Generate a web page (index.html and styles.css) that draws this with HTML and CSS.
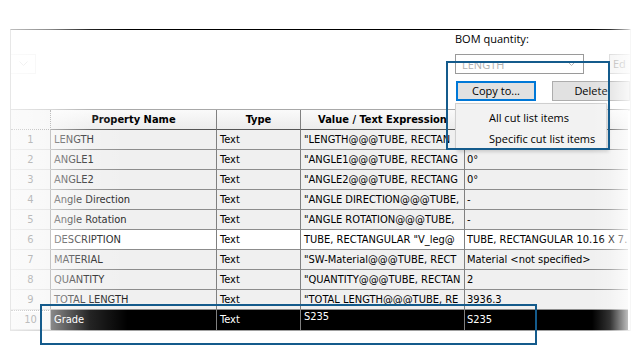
FILE: index.html
```html
<!DOCTYPE html>
<html lang="en">
<head>
    <meta charset="UTF-8">
    <title>Cut List Properties</title>
    <link rel="stylesheet" href="styles.css">
</head>
<body>
    <div class="stage">
        <div class="panel">
            <div class="toolbar">
                <div class="ghost-select">
                    <svg width="9" height="6" viewBox="0 0 9 6"><path d="M0.5 0.5 L4.5 4.5 L8.5 0.5" fill="none" stroke="#d6d6d6" stroke-width="1"/></svg>
                </div>
                <div class="bom">
                    <div class="bom-label">BOM quantity:</div>
                    <div class="bom-row">
                        <div class="select">
                            <span>LENGTH</span>
                            <svg width="9" height="6" viewBox="0 0 9 6"><path d="M0.5 0.5 L4.5 4.5 L8.5 0.5" fill="none" stroke="#b4b4b4" stroke-width="1"/></svg>
                        </div>
                        <div class="btn btn-disabled">Ed</div>
                    </div>
                    <div class="bom-row">
                        <div class="btn btn-focus">Copy to...</div>
                        <div class="btn btn-wide">Delete</div>
                    </div>
                </div>
            </div>

            <div class="grid">
                <div class="cell num head-num"></div>
                <div class="cell head">Property Name</div>
                <div class="cell head">Type</div>
                <div class="cell head">Value / Text Expression</div>
                <div class="cell head last"></div>

                <div class="cell num">1</div>
                <div class="cell name">LENGTH</div>
                <div class="cell">Text</div>
                <div class="cell">"LENGTH@@@TUBE, RECTAN</div>
                <div class="cell last"></div>

                <div class="cell num">2</div>
                <div class="cell name">ANGLE1</div>
                <div class="cell">Text</div>
                <div class="cell">"ANGLE1@@@TUBE, RECTANG</div>
                <div class="cell last">0°</div>

                <div class="cell num">3</div>
                <div class="cell name">ANGLE2</div>
                <div class="cell">Text</div>
                <div class="cell">"ANGLE2@@@TUBE, RECTANG</div>
                <div class="cell last">0°</div>

                <div class="cell num">4</div>
                <div class="cell name">Angle Direction</div>
                <div class="cell">Text</div>
                <div class="cell">"ANGLE DIRECTION@@@TUBE,</div>
                <div class="cell last">-</div>

                <div class="cell num">5</div>
                <div class="cell name">Angle Rotation</div>
                <div class="cell">Text</div>
                <div class="cell">"ANGLE ROTATION@@@TUBE,</div>
                <div class="cell last">-</div>

                <div class="cell num">6</div>
                <div class="cell name white">DESCRIPTION</div>
                <div class="cell white">Text</div>
                <div class="cell white">TUBE, RECTANGULAR "V_leg@</div>
                <div class="cell last white">TUBE, RECTANGULAR 10.16 X 7.</div>

                <div class="cell num">7</div>
                <div class="cell name">MATERIAL</div>
                <div class="cell">Text</div>
                <div class="cell">"SW-Material@@@TUBE, RECT</div>
                <div class="cell last">Material &lt;not specified&gt;</div>

                <div class="cell num">8</div>
                <div class="cell name">QUANTITY</div>
                <div class="cell">Text</div>
                <div class="cell">"QUANTITY@@@TUBE, RECTAN</div>
                <div class="cell last">2</div>

                <div class="cell num">9</div>
                <div class="cell name">TOTAL LENGTH</div>
                <div class="cell">Text</div>
                <div class="cell">"TOTAL LENGTH@@@TUBE, RE</div>
                <div class="cell last">3936.3</div>

                <div class="cell num num-focus">10</div>
                <div class="cell name sel">Grade</div>
                <div class="cell sel">Text</div>
                <div class="cell sel edit">S235</div>
                <div class="cell last sel">S235</div>
            </div>
        </div>

        <div class="menu">
            <div class="menu-item">All cut list items</div>
            <div class="menu-item">Specific cut list items</div>
        </div>

        <div class="fade fade-left"></div>
        <div class="fade fade-right"></div>

        <div class="callout callout-top"></div>
        <div class="callout callout-bottom"></div>
    </div>
</body>
</html>
```

FILE: styles.css
```css
body {
    margin: 0;
    background: #fff;
    font-family: "DejaVu Sans Condensed", "DejaVu Sans", sans-serif;
    font-stretch: condensed;
    font-size: 11px;
    color: #000;
}
.stage {
    position: relative;
    width: 640px;
    height: 360px;
    padding: 29px 0 0 10px;
    box-sizing: border-box;
    overflow: hidden;
}
.panel {
    width: 619px;
    border: 1px solid #a0a0a0;
    border-top-color: #000;
    overflow: hidden;
    background: #fff;
}
.toolbar {
    display: flex;
    height: 79px;
}
.ghost-select {
    flex: none;
    width: 23px;
    height: 18px;
    margin-top: 24px;
    border: 1px solid #ececec;
    border-left: none;
    display: flex;
    align-items: center;
    justify-content: center;
    padding-left: 1px;
}
.bom {
    margin-left: 419px;
    font-family: "Open Sans", sans-serif;
    font-stretch: normal;
    font-size: 11px;
    flex: none;
}
.bom-label {
    height: 16px;
    line-height: 16px;
    margin-top: 1px;
    color: #000;
}
.bom-row {
    display: flex;
    margin-top: 7px;
    height: 20px;
}
.select {
    height: 18px;
    border: 1px solid #9a9a9a;
    display: flex;
    align-items: center;
    justify-content: space-between;
    padding: 0 7px 0 6px;
    box-sizing: content-box;
    width: 114px;
    color: #b0b0b0;
}
.btn {
    height: 18px;
    line-height: 18px;
    border: 1px solid #adadad;
    background: #e1e1e1;
    text-align: center;
    flex: none;
}
.btn-disabled {
    width: 60px;
    margin-left: 25px;
    background: #f4f4f4;
    border-color: #d6d6d6;
    color: #a8a8a8;
    text-align: left;
    padding-left: 3px;
}
.btn-focus {
    width: 76px;
    height: 16px;
    line-height: 16px;
    border: 2px solid #0078d7;
    margin-left: 1px;
}
.btn-wide {
    width: 76px;
    margin-left: 16px;
}
.grid {
    display: grid;
    grid-template-columns: 40px 166px 84px 164px 163px;
    grid-auto-rows: 20px;
    border-top: 1px solid #a8a8a8;
    box-shadow: inset 0 1px 0 #d8d8d8;
}
.cell {
    background: #f0f0f0;
    border-right: 1px solid #808080;
    border-bottom: 1px solid #8c8c8c;
    line-height: 19px;
    padding-left: 3px;
    white-space: nowrap;
    overflow: hidden;
}
.cell.last {
    border-right: none;
    padding-left: 2px;
}
.cell.white {
    background: #fff;
}
.head {
    background: linear-gradient(#fafafa, #ececec);
    font-weight: bold;
    text-align: center;
    padding-left: 0;
    border-bottom-color: #555;
}
.num {
    padding: 0;
    text-align: center;
    color: #3c3c3c;
    border-bottom-color: #c8c8c8;
}
.head-num {
    border-right: 1px dotted #707070;
    border-bottom: 1px dotted #707070;
}
.num-focus {
    box-shadow: inset 0 1px 0 #fff;
    border-top: 1px dotted #707070;
    line-height: 18px;
}
.name {
    color: #222;
}
.sel {
    background: #000;
    color: #fff;
    border-bottom: none;
    border-right-color: #808080;
}
.sel.edit {
    line-height: 14px;
}
.menu {
    position: absolute;
    left: 455px;
    top: 103px;
    width: 152px;
    height: 47px;
    padding: 4px 0 0 33px;
    box-sizing: border-box;
    background: #f2f2f2;
    border: 1px solid #cfcfcf;
    font-family: "Open Sans", sans-serif;
    font-stretch: normal;
    font-size: 11px;
    box-shadow: 2px 2px 3px rgba(0,0,0,0.15);
}
.menu-item {
    height: 21px;
    line-height: 20px;
}
.fade {
    position: absolute;
    top: 0;
    height: 360px;
}
.fade-left {
    left: 0;
    width: 130px;
    background: linear-gradient(to right, rgba(255,255,255,0.8) 0, rgba(255,255,255,0.55) 50px, rgba(255,255,255,0.14) 90px, rgba(255,255,255,0) 128px);
}
.fade-right {
    left: 592px;
    width: 48px;
    background: linear-gradient(to right, rgba(255,255,255,0) 0, rgba(255,255,255,0.2) 18px, rgba(255,255,255,0.75) 36px, #fff 40px);
}
.callout {
    position: absolute;
    border: 2px solid #145b8c;
    box-sizing: border-box;
}
.callout-top {
    left: 446px;
    top: 61px;
    width: 164px;
    height: 89px;
}
.callout-bottom {
    left: 40px;
    top: 304px;
    width: 497px;
    height: 41px;
}
```
